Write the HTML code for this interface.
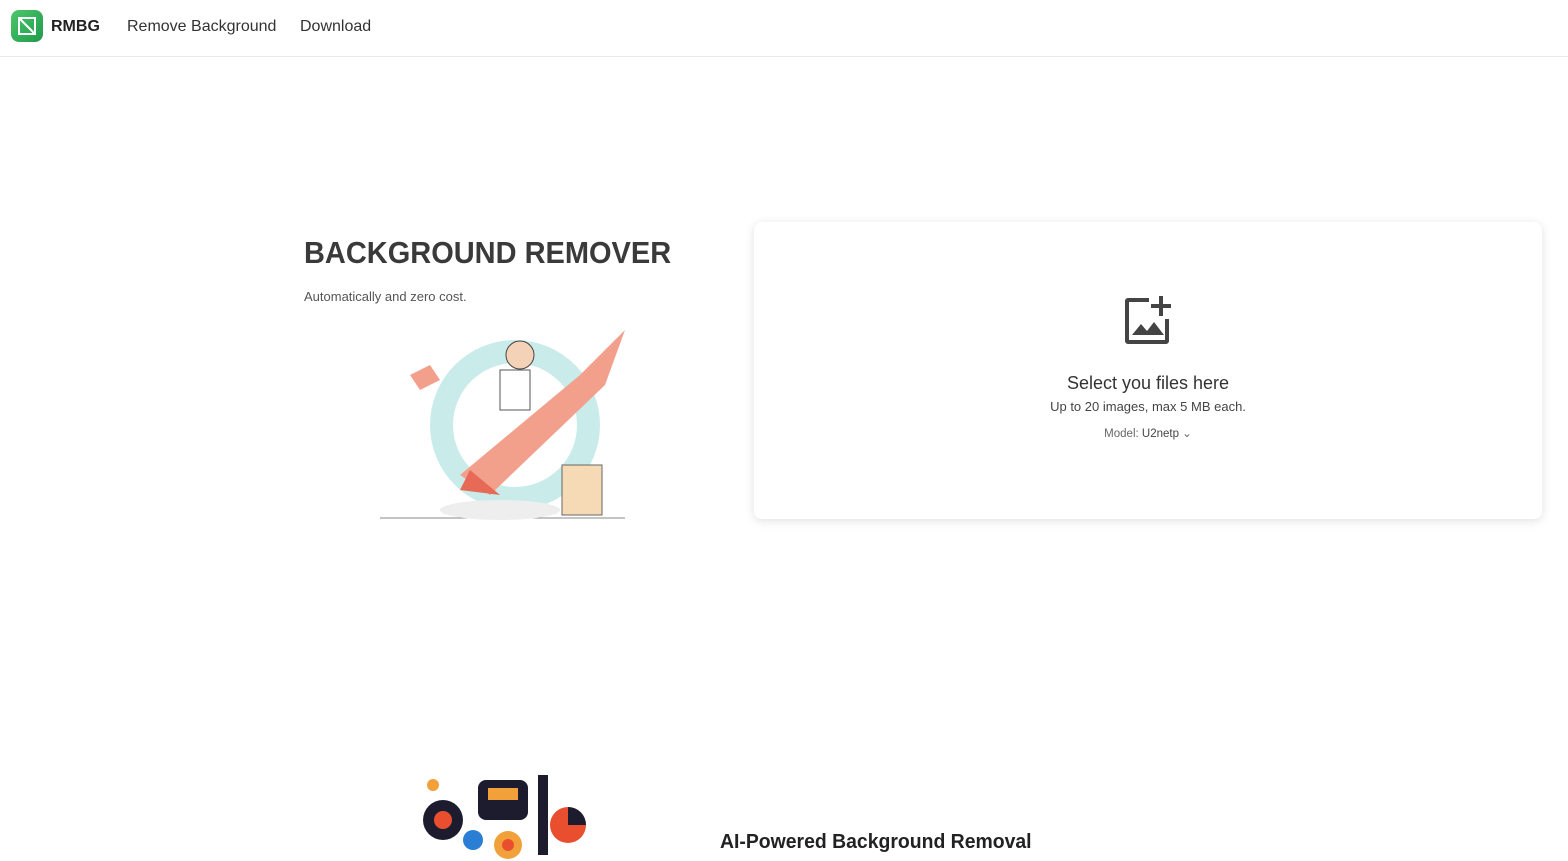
<!DOCTYPE html>
<html><head><meta charset="utf-8"><style>
*{margin:0;padding:0;box-sizing:border-box}
body{width:1568px;height:861px;overflow:hidden;background:#fff;font-family:"Liberation Sans",sans-serif;color:#222;position:relative}
.nav{height:57px;border-bottom:1px solid #e8e8e8;position:relative}
.logo{position:absolute;left:11px;top:10px;width:32px;height:32px;border-radius:8px;background:linear-gradient(135deg,#4cc76b,#1f9a4c)}
.nav span{position:absolute;top:18px;font-size:16px;color:#333}
h1{position:absolute;left:304px;top:235px;font-size:31px;font-weight:bold;color:#3a3a3a;transform:scaleX(0.935);transform-origin:left}
.sub{position:absolute;left:304px;top:289px;font-size:13px;color:#555}
.card{position:absolute;left:754px;top:222px;width:788px;height:297px;border-radius:8px;box-shadow:0 2px 10px rgba(0,0,0,0.12);background:#fff;text-align:center}
.t1{position:absolute;left:0;right:0;top:151px;font-size:18px;color:#333}
.t2{position:absolute;left:0;right:0;top:177px;font-size:13px;color:#444}
.t3{position:absolute;left:0;right:0;top:204px;font-size:11.5px;color:#666}
h2{position:absolute;left:720px;top:831px;font-size:20px;font-weight:bold;color:#222;transform:scaleX(0.97);transform-origin:left}
</style></head><body>
<div class="nav"><div class="logo"><svg width="32" height="32" viewBox="0 0 32 32"><rect x="8" y="8" width="16" height="16" fill="none" stroke="#fff" stroke-width="2"/><line x1="8" y1="8" x2="24" y2="24" stroke="#fff" stroke-width="2"/></svg></div>
<span style="left:51px;font-weight:bold;color:#222">RMBG</span>
<span style="left:127px">Remove Background</span>
<span style="left:300px">Download</span></div>
<h1>BACKGROUND REMOVER</h1>
<div class="sub">Automatically and zero cost.</div>
<svg style="position:absolute;left:380px;top:325px" width="250" height="200" viewBox="0 0 250 200">
<circle cx="135" cy="100" r="85" fill="#c9ecea"/><circle cx="135" cy="100" r="62" fill="#fff"/>
<polygon points="80,150 200,50 245,5 225,60 110,170" fill="#f2a08c"/>
<polygon points="90,145 120,170 80,165" fill="#e76a56"/>
<circle cx="140" cy="30" r="14" fill="#f3d2b8" stroke="#444"/>
<rect x="120" y="45" width="30" height="40" fill="#fff" stroke="#555"/>
<path d="M0 193 H245" stroke="#888"/>
<ellipse cx="120" cy="185" rx="60" ry="10" fill="#eee"/>
<rect x="182" y="140" width="40" height="50" fill="#f6d9b5" stroke="#666"/>
<path d="M30 50 l20 -10 l10 15 l-20 10z" fill="#f2a08c"/>
</svg>
<div class="card">
<svg style="position:absolute;left:369px;top:73px" width="50" height="50" viewBox="0 0 50 50"><path d="M26 3H5a3 3 0 0 0-3 3v40a3 3 0 0 0 3 3h38a3 3 0 0 0 3-3V24h-4v21H6V7h20z" fill="#444"/><path d="M36 1h4v8h8v4h-8v8h-4v-8h-8V9h8z" fill="#444"/><path d="M9 40l9-11 6 7 7-9 10 13z" fill="#444"/></svg>
<div class="t1">Select you files here</div>
<div class="t2">Up to 20 images, max 5 MB each.</div>
<div class="t3">Model: <span style="color:#444">U2netp</span> &#8964;</div>
</div>
<svg style="position:absolute;left:418px;top:770px" width="178" height="91" viewBox="0 0 178 91">
<rect width="178" height="91" fill="#fff"/>
<circle cx="25" cy="50" r="20" fill="#1c1c2e"/><circle cx="25" cy="50" r="9" fill="#e94f2f"/>
<rect x="60" y="10" width="50" height="40" rx="8" fill="#1c1c2e"/><rect x="70" y="18" width="30" height="12" fill="#f2a03a"/>
<circle cx="150" cy="55" r="18" fill="#e94f2f"/><path d="M150 55 V37 A18 18 0 0 1 168 55z" fill="#1c1c2e"/>
<circle cx="90" cy="75" r="14" fill="#f2a03a"/><circle cx="90" cy="75" r="6" fill="#e94f2f"/>
<rect x="120" y="5" width="10" height="80" fill="#1c1c2e"/><circle cx="15" cy="15" r="6" fill="#f2a03a"/>
<circle cx="55" cy="70" r="10" fill="#2a7fd4"/>
</svg>
<h2>AI-Powered Background Removal</h2>
</body></html>
